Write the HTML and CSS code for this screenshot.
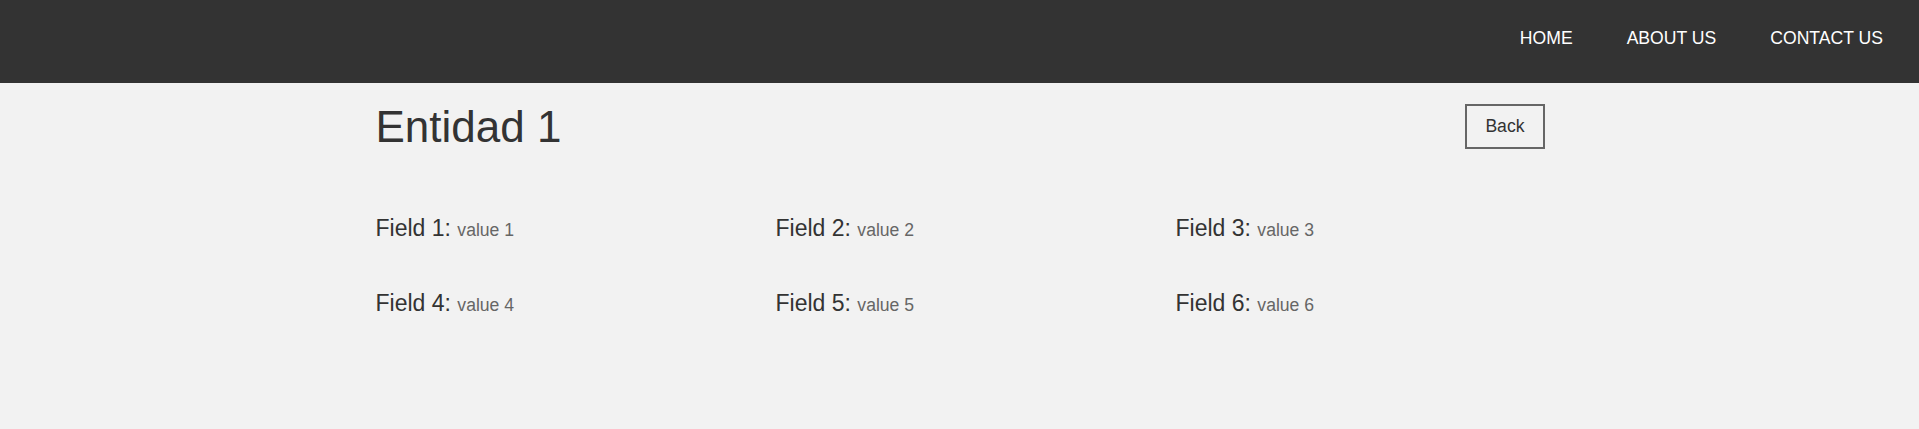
FILE: index.html
```html
<!DOCTYPE html>
<html lang="es">
<head>
<meta charset="utf-8">
<title>Entidad 1</title>
<link rel="stylesheet" href="styles.css">
</head>
<body>
<header class="topbar">
  <nav class="nav">
    <a class="nav-link" href="#">HOME</a>
    <a class="nav-link" href="#">ABOUT US</a>
    <a class="nav-link" href="#">CONTACT US</a>
  </nav>
</header>
<main class="container">
  <div class="title-row">
    <h1 class="title">Entidad 1</h1>
    <button class="back-btn" type="button">Back</button>
  </div>
  <div class="fields">
    <div class="field"><span class="label">Field 1:</span> <span class="value">value 1</span></div>
    <div class="field"><span class="label">Field 2:</span> <span class="value">value 2</span></div>
    <div class="field"><span class="label">Field 3:</span> <span class="value">value 3</span></div>
    <div class="field"><span class="label">Field 4:</span> <span class="value">value 4</span></div>
    <div class="field"><span class="label">Field 5:</span> <span class="value">value 5</span></div>
    <div class="field"><span class="label">Field 6:</span> <span class="value">value 6</span></div>
  </div>
</main>
</body>
</html>
```
FILE: styles.css
```css
* { box-sizing: border-box; }
html, body {
  margin: 0;
  padding: 0;
  background: #f2f2f2;
  font-family: "Liberation Sans", Arial, sans-serif;
  color: #333333;
}
.topbar {
  height: 83px;
  background: #333333;
  display: flex;
  justify-content: flex-end;
  padding-right: 9px;
}
.nav {
  display: flex;
  align-items: flex-start;
}
.nav-link {
  color: #ffffff;
  text-decoration: none;
  font-size: 17.6px;
  line-height: 76px;
  padding: 0 27px;
}
.container {
  width: 1200px;
  margin: 0 auto;
}
.title-row {
  display: flex;
  justify-content: space-between;
  align-items: flex-start;
  padding: 21px 15px 0 16px;
}
.title {
  margin: 0;
  font-size: 44px;
  font-weight: normal;
  line-height: 46px;
  color: #333333;
}
.back-btn {
  height: 45px;
  padding: 0 18px;
  border: 2px solid #666666;
  background: #f2f2f2;
  color: #333333;
  font-family: "Liberation Sans", Arial, sans-serif;
  font-size: 17.6px;
  display: flex;
  align-items: center;
  cursor: pointer;
}
.fields {
  display: grid;
  grid-template-columns: repeat(3, 400px);
  row-gap: 50px;
  margin-top: 66px;
  padding-left: 1px;
}
.field {
  padding: 0 15px;
  font-size: 23px;
  line-height: 25px;
  color: #333333;
}
.value {
  font-size: 17.6px;
  line-height: 1;
  color: #666666;
}
```
